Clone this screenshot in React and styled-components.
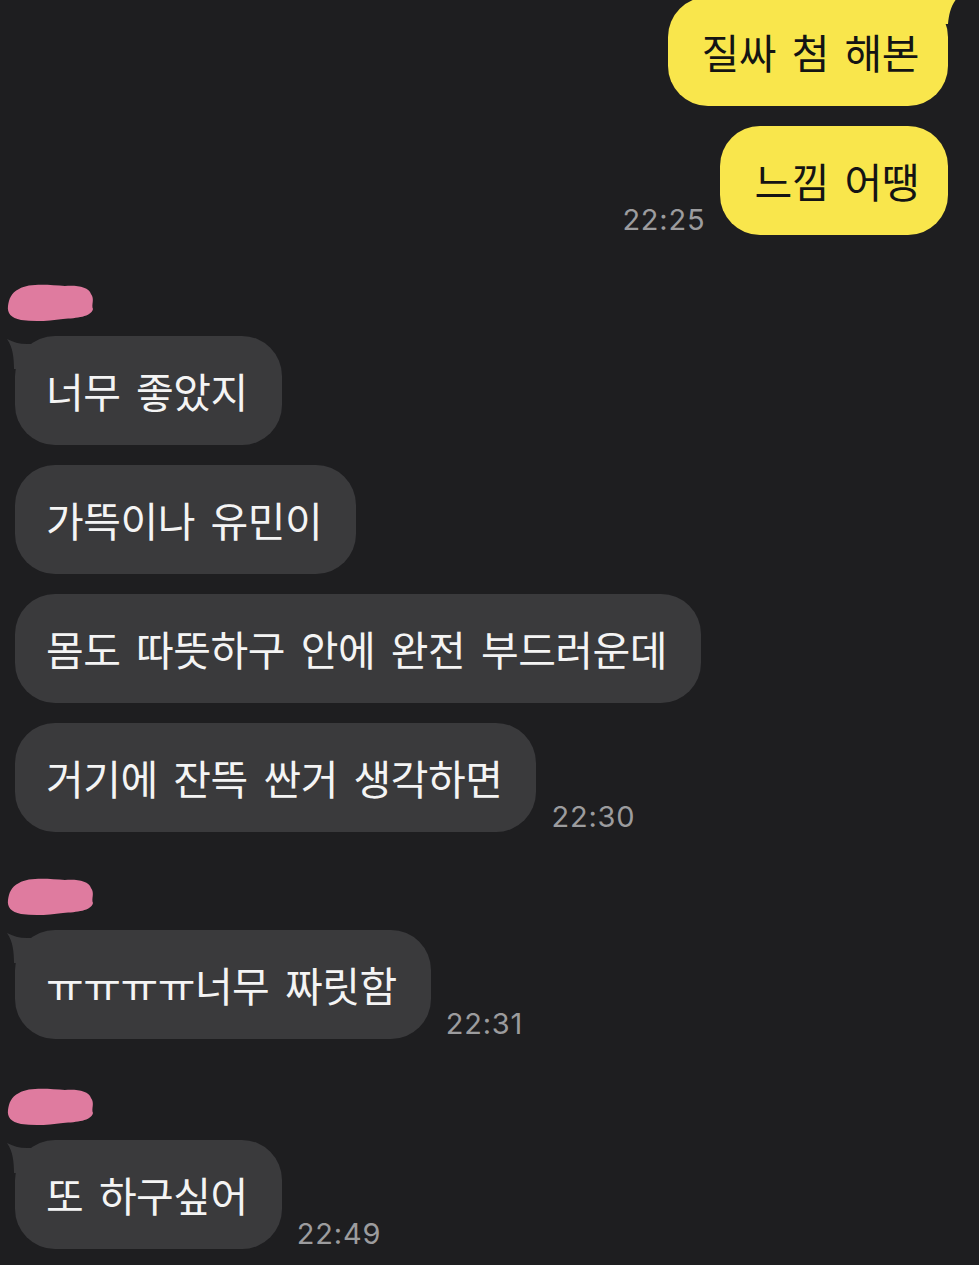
import React from "react";
import styled, { createGlobalStyle } from "styled-components";

const GlobalStyle = createGlobalStyle`
  html, body {
    margin: 0;
    padding: 0;
    background: #1e1e20;
  }
  body {
    font-family: "Noto Sans CJK KR", "Noto Sans", sans-serif;
  }
`;

const Screen = styled.div`
  width: 979px;
  height: 1265px;
  overflow: hidden;
  background: #1e1e20;
  display: flex;
  flex-direction: column;
`;

const Group = styled.div`
  display: flex;
  flex-direction: column;
  align-items: ${props => (props.$mine ? "flex-end" : "flex-start")};
  gap: 20px;
  padding: ${props => (props.$mine ? "0 31px 0 0" : "0 0 0 15px")};
  margin-top: ${props => props.$top || 0}px;
`;

const NameRow = styled.div`
  height: 40px;
  margin: 0 0 -6px -10px;
  display: flex;
  align-items: center;
`;

const Row = styled.div`
  display: flex;
  flex-direction: ${props => (props.$mine ? "row-reverse" : "row")};
  align-items: flex-end;
  gap: 15px;
`;

const Bubble = styled.div`
  position: relative;
  box-sizing: border-box;
  height: 109px;
  padding: 0 ${props => (props.$mine ? "29px 0 34px" : "34px 0 31px")};
  display: flex;
  align-items: center;
  border-radius: 40px;
  background: ${props => (props.$mine ? "#f9e64c" : "#3a3a3c")};
  color: ${props => (props.$mine ? "#141414" : "#f4f4f4")};
  font-size: 41px;
  letter-spacing: -0.5px;
  word-spacing: 7px;
  white-space: nowrap;
  line-height: 1;
`;

const Tail = styled.svg`
  position: absolute;
  top: ${props => (props.$mine ? "-3px" : "3px")};
  ${props => (props.$mine ? "right: -11px;" : "left: -8px;")}
  width: 40px;
  height: 30px;
`;

const Time = styled.span`
  font-family: Inter, "Liberation Sans", sans-serif;
  font-size: 29px;
  line-height: 1;
  color: #9c9c9e;
  margin-bottom: 1px;
  letter-spacing: 0.8px;
`;

const Blob = () => (
  <svg width="92" height="42" viewBox="0 0 92 42">
    <path
      d="M14 8 C24 2 44 4 60 5 C72 4 84 6 86 13 C90 18 86 24 88 28 C86 36 72 37 58 38 C44 40 30 41 16 39 C6 37 2 32 3 25 C4 18 6 12 14 8 Z"
      fill="#df7b9f"
    />
  </svg>
);

const LeftTail = () => (
  <Tail viewBox="0 0 40 30">
    <path d="M0 0 C6 3 12 5 20 5 L30 5 L30 30 L7 30 C7 20 6 8 0 0 Z" fill="#3a3a3c" />
  </Tail>
);

const RightTail = () => (
  <Tail $mine viewBox="0 0 40 30">
    <path d="M40 2 C34 4 28 4 20 3 L0 3 L0 30 L29 30 C30 20 32 10 40 2 Z" fill="#f9e64c" />
  </Tail>
);

const Message = ({ mine, text, time, tail }) => (
  <Row $mine={mine}>
    <Bubble $mine={mine}>
      {tail && (mine ? <RightTail /> : <LeftTail />)}
      {text}
    </Bubble>
    {time && <Time>{time}</Time>}
  </Row>
);

const groups = [
  { mine: true, top: -3, items: ["질싸 첨 해본", "느낌 어땡"], time: "22:25" },
  {
    top: 47,
    items: ["너무 좋았지", "가뜩이나 유민이", "몸도 따뜻하구 안에 완전 부드러운데", "거기에 잔뜩 싼거 생각하면"],
    time: "22:30"
  },
  { top: 44, items: ["ㅠㅠㅠㅠ너무 짜릿함"], time: "22:31" },
  { top: 47, items: ["또 하구싶어"], time: "22:49" }
];

const App = () => (
  <>
    <GlobalStyle />
    <Screen>
      {groups.map((g, gi) => (
        <Group key={gi} $mine={g.mine} $top={g.top}>
          {!g.mine && (
            <NameRow>
              <Blob />
            </NameRow>
          )}
          {g.items.map((text, i) => (
            <Message
              key={i}
              mine={g.mine}
              text={text}
              tail={i === 0}
              time={i === g.items.length - 1 ? g.time : null}
            />
          ))}
        </Group>
      ))}
    </Screen>
  </>
);

export default App;
